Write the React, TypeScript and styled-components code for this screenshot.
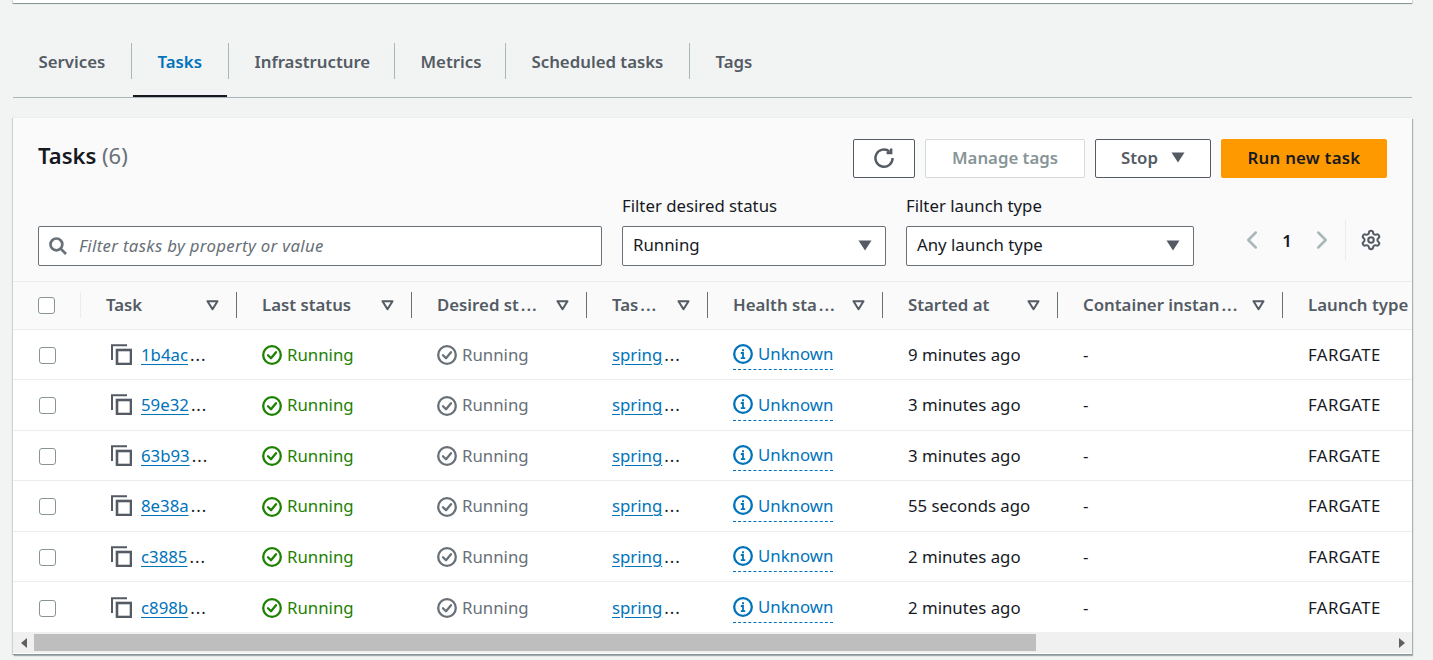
import React from 'react';
import styled, { createGlobalStyle } from 'styled-components';
import { Settings, ChevronLeft, ChevronRight } from 'lucide-react';

const GlobalStyle = createGlobalStyle`
  html, body {
    margin: 0;
    height: 100%;
    overflow: hidden;
    background: #f2f3f3;
    font-family: "Noto Sans", "Open Sans", sans-serif;
    font-size: 16.8px;
    color: #16191f;
  }
  * {
    box-sizing: border-box;
  }
`;

const Page = styled.div`
  width: 1433px;
  height: 660px;
  padding: 0 21px 0 13px;
`;

const TopCard = styled.div`
  height: 4px;
  background: #fff;
  border-bottom: 1px solid #879596;
  box-shadow: 1px 0 1px rgba(0, 28, 36, 0.15), -1px 0 1px rgba(0, 28, 36, 0.15);
`;

const TabBar = styled.div`
  display: flex;
  align-items: center;
  height: 94px;
  margin-bottom: 20px;
  padding-top: 22px;
  border-bottom: 1px solid #aab7b8;
`;

const Tab = styled.div<{ $active?: boolean; $width: number }>`
  position: relative;
  display: flex;
  align-items: center;
  flex: 0 0 ${(p) => p.$width}px;
  height: 36px;
  margin-top: -1px;
  padding-left: 25.5px;
  font-weight: 600;
  color: ${(p) => (p.$active ? '#0073bb' : '#545b64')};
  border-right: 1px solid #aab7b8;
  &:last-child {
    border-right: none;
  }
  ${(p) =>
    p.$active &&
    `
    &::after {
      content: '';
      position: absolute;
      left: 1px;
      right: 1px;
      bottom: -18px;
      height: 2px;
      background: #16191f;
    }
  `}
`;

const Panel = styled.div`
  height: 537px;
  background: #fff;
  border-bottom: 1px solid #879596;
  box-shadow: 1px 1px 1px rgba(0, 28, 36, 0.3), -1px 0 1px rgba(0, 28, 36, 0.15);
  overflow: hidden;
`;

const PanelHeader = styled.div`
  height: 164px;
  padding: 21px 25px 0 25px;
  background: #fafafa;
  border-bottom: 1px solid #eaeded;
`;

const TitleRow = styled.div`
  display: flex;
  align-items: flex-start;
  justify-content: space-between;
`;

const Title = styled.h2`
  margin: 0;
  font-size: 22px;
  line-height: 32px;
  font-weight: 600;
  color: #16191f;
`;

const Count = styled.span`
  font-weight: 400;
  color: #687078;
`;

const Actions = styled.div`
  display: flex;
  gap: 10px;
`;

const Button = styled.div<{ $kind?: 'default' | 'disabled' | 'primary'; $width: number }>`
  display: flex;
  align-items: center;
  justify-content: center;
  gap: 13px;
  width: ${(p) => p.$width}px;
  height: 39px;
  padding-bottom: 2px;
  font-weight: 600;
  letter-spacing: ${(p) => (p.$kind === 'primary' ? '0.25px' : '0')};
  border-radius: 2px;
  border: 1px solid
    ${(p) => (p.$kind === 'disabled' ? '#d5dbdb' : p.$kind === 'primary' ? '#ff9900' : '#545b64')};
  background: ${(p) => (p.$kind === 'primary' ? '#ff9900' : '#fff')};
  color: ${(p) => (p.$kind === 'disabled' ? '#879596' : p.$kind === 'primary' ? '#16191f' : '#545b64')};
`;

const FilterRow = styled.div`
  display: flex;
  align-items: flex-end;
  gap: 20px;
  margin-top: 17px;
`;

const SearchBox = styled.div`
  display: flex;
  align-items: center;
  gap: 12px;
  width: 564px;
  height: 40px;
  padding: 0 10px;
  background: #fff;
  border: 1px solid #687078;
  border-radius: 2px;
  color: #687078;
`;

const Placeholder = styled.span`
  margin-bottom: 2px;
  font-style: italic;
  letter-spacing: 0.33px;
`;

const Field = styled.div`
  display: flex;
  flex-direction: column;
  gap: 9px;
`;

const Label = styled.div`
  line-height: 22px;
  color: #16191f;
`;

const Select = styled.div<{ $width: number }>`
  display: flex;
  align-items: center;
  justify-content: space-between;
  width: ${(p) => p.$width}px;
  height: 40px;
  padding: 0 13px 0 10px;
  background: #fff;
  border: 1px solid #687078;
  border-radius: 2px;
`;

const SelectValue = styled.span`
  margin-bottom: 3px;
`;

const Pager = styled.div`
  display: flex;
  align-items: center;
  flex: 1;
  height: 40px;
  margin-bottom: 6px;
  padding-left: 23px;
`;

const PageNumber = styled.span`
  width: 40px;
  text-align: center;
  font-weight: 600;
  color: #16191f;
`;

const PagerSettings = styled.div`
  display: flex;
  align-items: center;
  height: 40px;
  margin-left: 8px;
  padding-left: 14px;
  border-left: 1px solid #eaeded;
  color: #545b64;
`;

const Table = styled.table`
  table-layout: fixed;
  width: 1445px;
  border-collapse: collapse;
`;

const HeadRow = styled.tr`
  height: 47px;
  background: #fafafa;
  border-bottom: 1px solid #eaeded;
`;

const HeadCell = styled.th`
  padding: 0;
  font-weight: 600;
  text-align: left;
  color: #545b64;
`;

const HeadInner = styled.div<{ $muted?: boolean }>`
  display: flex;
  align-items: center;
  justify-content: space-between;
  height: 26px;
  margin-left: -1px;
  padding: 0 18px 0 25px;
  border-left: 1px solid ${(p) => (p.$muted ? '#eaeded' : '#687078')};
  white-space: nowrap;
`;

const HeadLabel = styled.span`
  margin-bottom: 2px;
`;

const CheckCell = styled.div<{ $body?: boolean }>`
  display: flex;
  padding-left: 25px;
  margin-top: ${(p) => (p.$body ? '2px' : '0')};
`;

const Checkbox = styled.div`
  width: 17px;
  height: 17px;
  background: #fff;
  border: 1.5px solid #879596;
  border-radius: 3px;
`;

const Row = styled.tr`
  height: 50.5px;
  border-bottom: 1px solid #eaeded;
  &:last-child {
    border-bottom: none;
  }
`;

const Cell = styled.td`
  padding: 0 0 0 25px;
  white-space: nowrap;
  overflow: hidden;
`;

const LaunchCell = styled(Cell)`
  letter-spacing: 0.4px;
`;

const TaskLink = styled.div`
  display: flex;
  align-items: center;
  gap: 9px;
  padding-left: 5px;
`;

const Link = styled.span`
  color: #0073bb;
  text-decoration: underline;
  text-underline-offset: 3px;
`;

// truncated labels: wider dots than the font's own ellipsis glyph
const Dots = styled.span`
  margin-left: 2px;
  letter-spacing: 1px;
  color: #16191f;
`;

const HeadDots = styled(Dots)`
  color: #545b64;
`;

const Status = styled.div<{ $color: string }>`
  display: flex;
  align-items: center;
  gap: 5px;
  width: fit-content;
  color: ${(p) => p.$color};
  svg {
    margin-top: 2px;
  }
`;

const Health = styled(Status)`
  margin-top: 4px;
  padding-bottom: 4px;
  border-bottom: 1px dashed #0073bb;
  svg {
    margin-top: 0;
  }
`;

const Scrollbar = styled.div`
  display: flex;
  align-items: center;
  justify-content: space-between;
  height: 21px;
  background: #f0f0f0;
`;

const ScrollArrow = styled.div`
  display: flex;
  justify-content: center;
  width: 21px;
  color: #606060;
`;

const ScrollTrack = styled.div`
  flex: 1;
  height: 17px;
`;

const ScrollThumb = styled.div`
  width: 1002px;
  height: 100%;
  background: #bebebe;
`;

const Caret = ({ color = '#545b64', size = 14 }: { color?: string; size?: number }) => (
  <svg width={size} height={size * 0.8} viewBox="0 0 14 11">
    <path d="M0.5 0.5h13L7 10.5z" fill={color} />
  </svg>
);

const SortCaret = () => (
  <svg width="13" height="11" viewBox="0 0 13 11" style={{ flexShrink: 0 }}>
    <path d="M1.5 1.2h10L6.5 9.2z" fill="none" stroke="#545b64" strokeWidth="2" strokeLinejoin="round" />
  </svg>
);

const SearchIcon = () => (
  <svg width="18" height="18" viewBox="0 0 18 18" fill="none" stroke="#687078" strokeWidth="2.7" style={{ flexShrink: 0 }}>
    <circle cx="7.4" cy="7.4" r="5.9" />
    <path d="M11.6 11.6L17 17" />
  </svg>
);

const RefreshIcon = () => (
  <svg width="22" height="22" viewBox="0 0 22 22" fill="none" stroke="#545b64" strokeWidth="2.4">
    <path d="M16.6 4.6A8.6 8.6 0 1 0 19.6 11" />
    <path d="M18.2 1.4v4.6h-4.6" fill="none" />
  </svg>
);

const CopyIcon = () => (
  <svg width="21" height="21" viewBox="0 0 21 21" fill="none" stroke="#545b64" strokeWidth="2" style={{ flexShrink: 0 }}>
    <path d="M1 16V1.2h15" />
    <rect x="6" y="6" width="14" height="14" strokeWidth="2.6" />
  </svg>
);

const CheckIcon = ({ color }: { color: string }) => (
  <svg width="20" height="20" viewBox="0 0 20 20" fill="none" stroke={color} strokeWidth="2.3" style={{ flexShrink: 0 }}>
    <circle cx="10" cy="10" r="8.8" />
    <path d="M6 10.2l3 3 5-6" strokeLinecap="round" strokeLinejoin="round" />
  </svg>
);

const InfoIcon = () => (
  <svg width="20" height="20" viewBox="0 0 20 20" fill="none" stroke="#0073bb" strokeWidth="2.3" style={{ flexShrink: 0 }}>
    <circle cx="10" cy="10" r="8.8" />
    <path d="M7.8 9h2.2v5M7.8 14.2h4.4" strokeWidth="1.8" />
    <path d="M10 5.2v2" strokeWidth="2" />
  </svg>
);

const tabs = [
  { label: 'Services', width: 119 },
  { label: 'Tasks', width: 97 },
  { label: 'Infrastructure', width: 166 },
  { label: 'Metrics', width: 111 },
  { label: 'Scheduled tasks', width: 184 },
  { label: 'Tags', width: 100 },
];

const columns = [
  { label: 'Task', width: 156 },
  { label: 'Last status', width: 175 },
  { label: 'Desired st', width: 175, cut: true },
  { label: 'Tas', width: 121, cut: true },
  { label: 'Health sta', width: 175, cut: true },
  { label: 'Started at', width: 175 },
  { label: 'Container instan', width: 225, cut: true },
  { label: 'Launch type', width: 175 },
];

const tasks = [
  { id: '1b4ac', started: '9 minutes ago' },
  { id: '59e32', started: '3 minutes ago' },
  { id: '63b93', started: '3 minutes ago' },
  { id: '8e38a', started: '55 seconds ago' },
  { id: 'c3885', started: '2 minutes ago' },
  { id: 'c898b', started: '2 minutes ago' },
];

export default function App() {
  return (
    <Page>
      <GlobalStyle />
      <TopCard />
      <TabBar>
        {tabs.map((t) => (
          <Tab key={t.label} $width={t.width} $active={t.label === 'Tasks'}>
            {t.label}
          </Tab>
        ))}
      </TabBar>
      <Panel>
        <PanelHeader>
          <TitleRow>
            <Title>
              Tasks <Count>(6)</Count>
            </Title>
            <Actions>
              <Button $width={62}>
                <RefreshIcon />
              </Button>
              <Button $kind="disabled" $width={160}>
                Manage tags
              </Button>
              <Button $width={116}>
                Stop <Caret />
              </Button>
              <Button $kind="primary" $width={166}>
                Run new task
              </Button>
            </Actions>
          </TitleRow>
          <FilterRow>
            <SearchBox>
              <SearchIcon />
              <Placeholder>Filter tasks by property or value</Placeholder>
            </SearchBox>
            <Field>
              <Label>Filter desired status</Label>
              <Select $width={264}>
                <SelectValue>Running</SelectValue> <Caret />
              </Select>
            </Field>
            <Field>
              <Label>Filter launch type</Label>
              <Select $width={288}>
                <SelectValue>Any launch type</SelectValue> <Caret />
              </Select>
            </Field>
            <Pager>
              <ChevronLeft size={30} color="#aab7b8" strokeWidth={2} />
              <PageNumber>1</PageNumber>
              <ChevronRight size={30} color="#aab7b8" strokeWidth={2} />
              <PagerSettings>
                <Settings size={22} strokeWidth={2.2} />
              </PagerSettings>
            </Pager>
          </FilterRow>
        </PanelHeader>
        <Table>
          <colgroup>
            <col style={{ width: 68 }} />
            {columns.map((c) => (
              <col key={c.label} style={{ width: c.width }} />
            ))}
          </colgroup>
          <thead>
            <HeadRow>
              <HeadCell>
                <CheckCell>
                  <Checkbox />
                </CheckCell>
              </HeadCell>
              {columns.map((c, i) => (
                <HeadCell key={c.label}>
                  <HeadInner $muted={i === 0}>
                    <HeadLabel>
                      {c.label}
                      {c.cut && <HeadDots>...</HeadDots>}
                    </HeadLabel>
                    {i < columns.length - 1 && <SortCaret />}
                  </HeadInner>
                </HeadCell>
              ))}
            </HeadRow>
          </thead>
          <tbody>
            {tasks.map((t) => (
              <Row key={t.id}>
                <td>
                  <CheckCell $body>
                    <Checkbox />
                  </CheckCell>
                </td>
                <Cell>
                  <TaskLink>
                    <CopyIcon />
                    <span>
                      <Link>{t.id}</Link>
                      <Dots>...</Dots>
                    </span>
                  </TaskLink>
                </Cell>
                <Cell>
                  <Status $color="#1d8102">
                    <CheckIcon color="#1d8102" />
                    Running
                  </Status>
                </Cell>
                <Cell>
                  <Status $color="#687078">
                    <CheckIcon color="#687078" />
                    Running
                  </Status>
                </Cell>
                <Cell>
                  <Link>spring</Link>
                  <Dots>...</Dots>
                </Cell>
                <Cell>
                  <Health $color="#0073bb">
                    <InfoIcon />
                    Unknown
                  </Health>
                </Cell>
                <Cell>{t.started}</Cell>
                <Cell>-</Cell>
                <LaunchCell>FARGATE</LaunchCell>
              </Row>
            ))}
          </tbody>
        </Table>
        <Scrollbar>
          <ScrollArrow>
            <svg width="6" height="10" viewBox="0 0 6 10">
              <path d="M6 0v10L0 5z" fill="currentColor" />
            </svg>
          </ScrollArrow>
          <ScrollTrack>
            <ScrollThumb />
          </ScrollTrack>
          <ScrollArrow>
            <svg width="6" height="10" viewBox="0 0 6 10">
              <path d="M0 0v10l6-5z" fill="currentColor" />
            </svg>
          </ScrollArrow>
        </Scrollbar>
      </Panel>
    </Page>
  );
}
